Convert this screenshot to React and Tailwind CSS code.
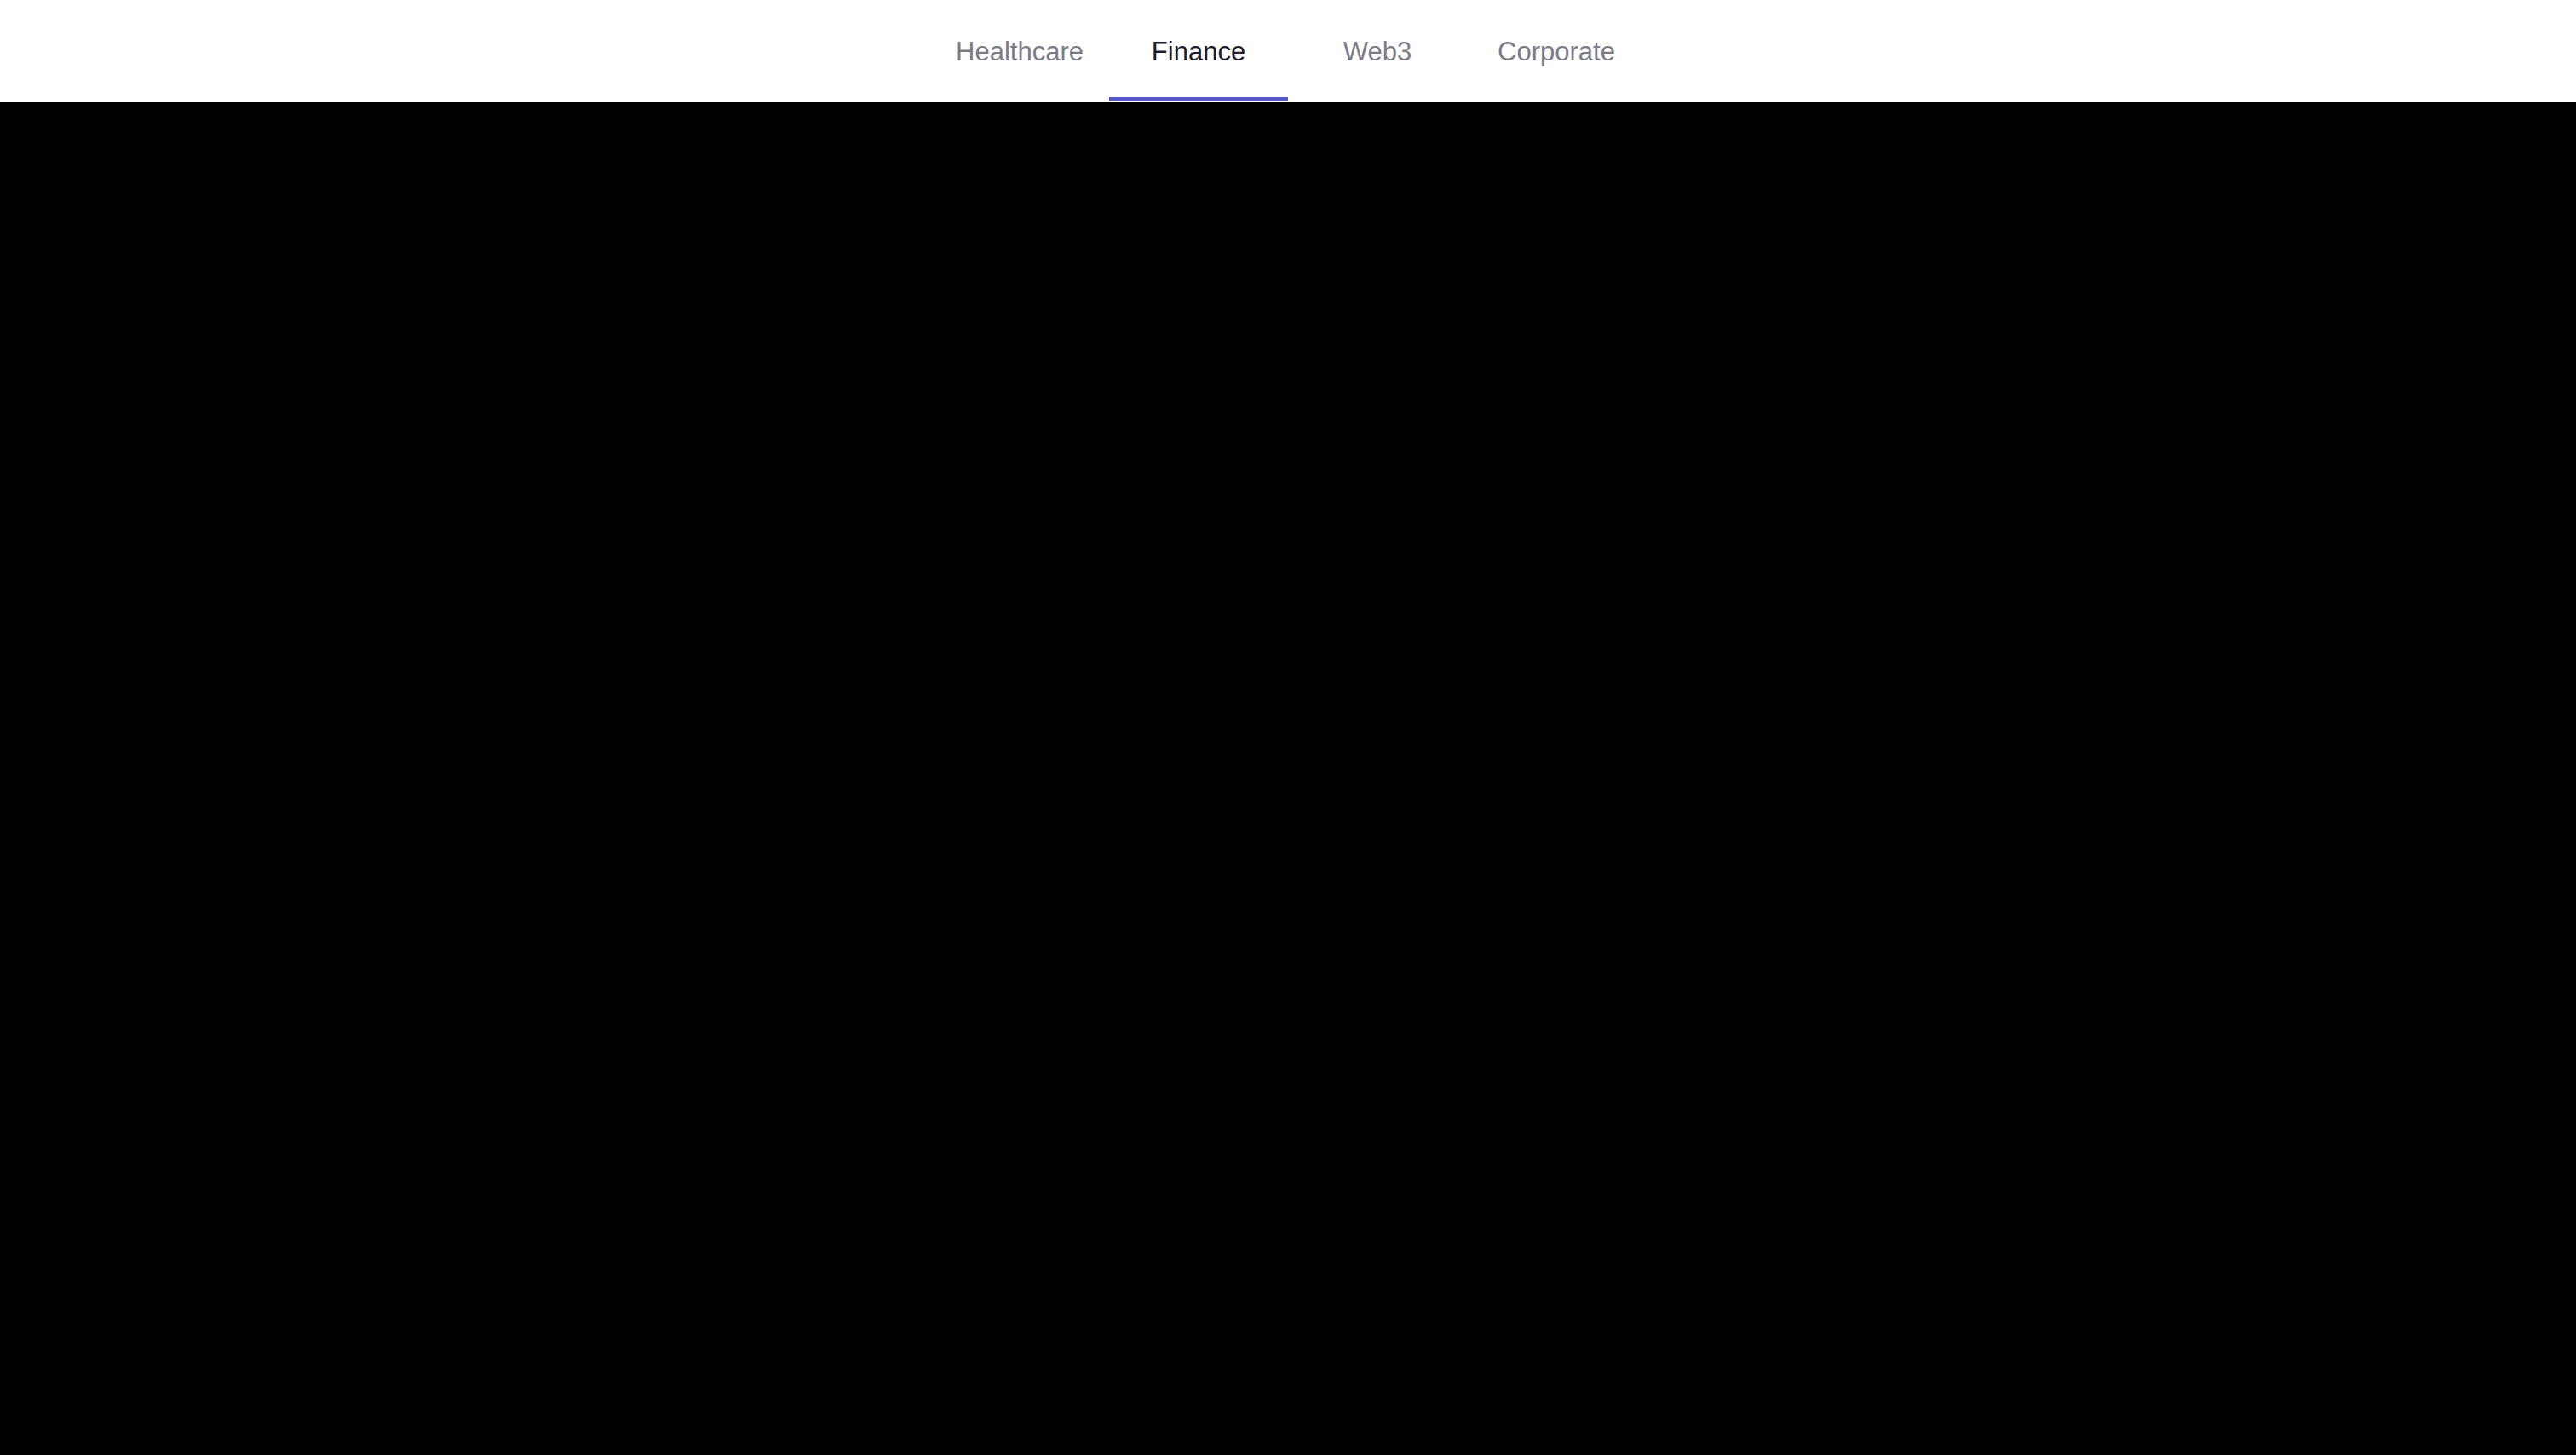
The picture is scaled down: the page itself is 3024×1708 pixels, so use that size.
import React, { useState } from 'react';

const tabs = ['Healthcare', 'Finance', 'Web3', 'Corporate'];

const App = () => {
  const [active, setActive] = useState('Finance');

  return (
    <div className="min-h-[1708px] bg-black font-['Liberation_Sans',Arial,sans-serif]">
      <header className="bg-white h-[120px] flex justify-center">
        <nav className="flex items-start">
          {tabs.map((tab) => (
            <button
              key={tab}
              onClick={() => setActive(tab)}
              className={
                tab === active
                  ? 'w-[210px] h-[118px] flex items-center justify-center pt-[9px] border-b-4 border-[#5558c9] text-[31px] text-[#1d1c2c]'
                  : 'w-[210px] h-[118px] flex items-center justify-center pt-[9px] border-b-4 border-transparent text-[31px] text-[#7b7b88]'
              }
            >
              {tab}
            </button>
          ))}
        </nav>
      </header>
      <main className="bg-black h-[1588px]"></main>
    </div>
  );
};

export default App;
